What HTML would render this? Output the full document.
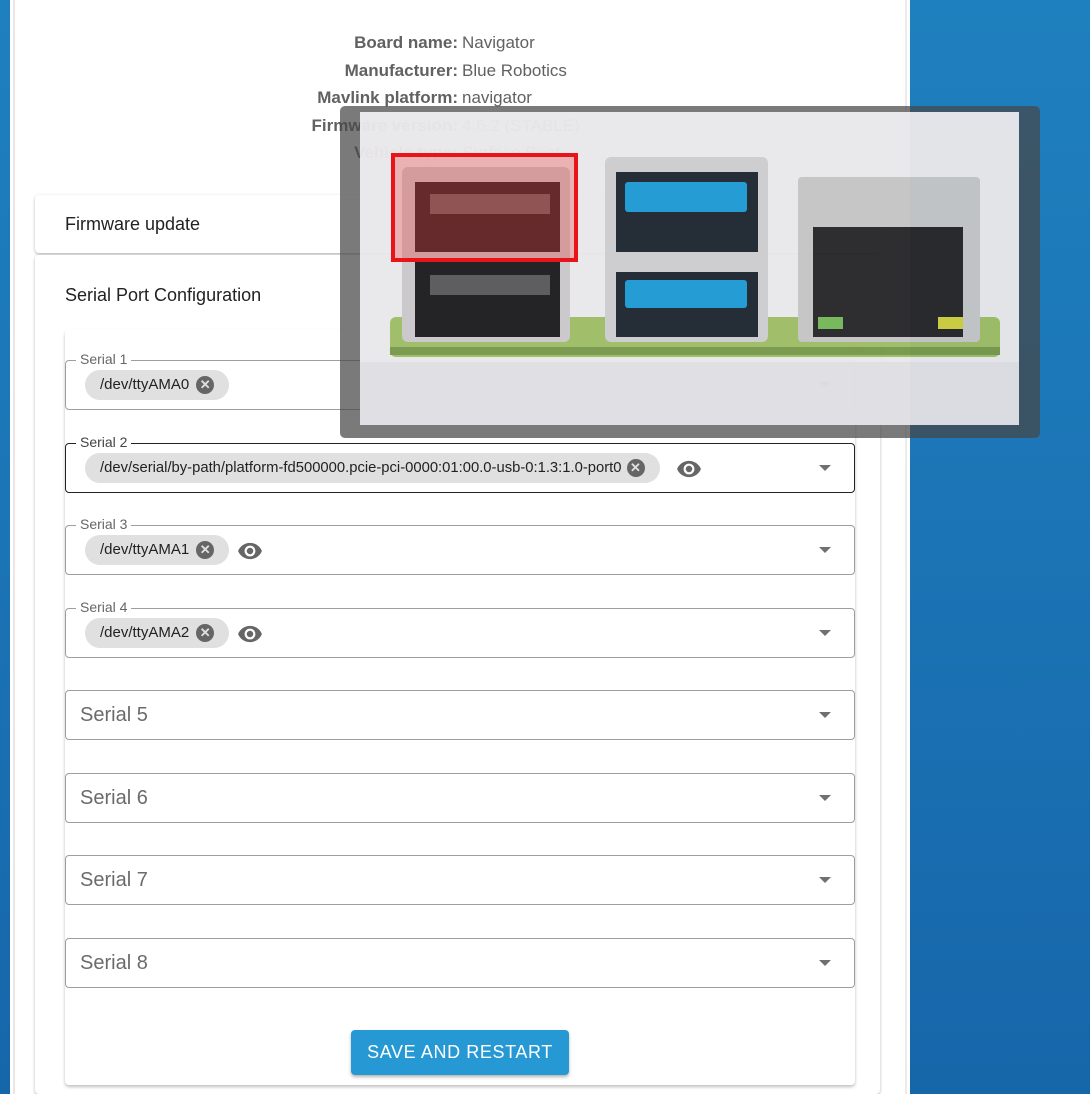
<!DOCTYPE html>
<html><head><meta charset="utf-8">
<style>
*{box-sizing:border-box;margin:0;padding:0}
body{width:1090px;height:1094px;overflow:hidden;position:relative;font-family:"Liberation Sans",Arial,sans-serif;background:linear-gradient(180deg,#1f80bf 0%,#1b74b5 50%,#1666aa 100%)}
.page{position:absolute;left:10px;top:0;width:900px;height:1094px;background:#fff}
.page:before{content:"";position:absolute;left:3px;top:0;width:2px;height:100%;background:#ece4e6}
.page:after{content:"";position:absolute;right:3px;top:0;width:2px;height:100%;background:#ebebeb}
.info{position:absolute;left:0;width:900px;top:31px;font-size:17px;color:#616161}
.info div{height:27.5px;line-height:24px;position:relative}
.info b{position:absolute;right:452px;font-weight:bold}
.info span{position:absolute;left:452px}
.panel{position:absolute;left:35px;width:845px;background:#fff;box-shadow:0 1px 3px rgba(0,0,0,.2),0 2px 2px rgba(0,0,0,.1);border-radius:4px}
.ptitle{position:absolute;left:30px;font-size:18px;color:#222}
.card{position:absolute;left:65px;top:330px;width:790px;height:755px;background:#fff;border-radius:4px;box-shadow:0 2px 3px rgba(0,0,0,.25)}
.field{position:absolute;left:65px;width:790px;height:50px;border:1px solid #9e9e9e;border-radius:4px;background:#fff}
.field.dark{border-color:#222}
.field .lbl{position:absolute;left:10px;top:-10px;background:#fff;padding:0 4px;font-size:14px;color:#666;line-height:16px}
.field .ph{position:absolute;left:14px;top:13px;font-size:20px;color:#6b6b6b}
.field .arr{position:absolute;right:23px;top:21px;width:0;height:0;border-left:6px solid transparent;border-right:6px solid transparent;border-top:6px solid #707070}
.chip{position:absolute;left:19px;top:9px;height:30px;border-radius:15px;background:#e0e0e0;font-size:15px;color:#222;line-height:30px;padding:0 40px 0 15px}
.chip .x{position:absolute;right:15px;top:6px;width:18px;height:18px;border-radius:50%;background:#666;color:#e0e0e0;font-size:13px;line-height:18px;text-align:center;font-weight:bold}
.eye{position:absolute;top:12px}
.btn{position:absolute;left:351px;top:1030px;width:218px;height:45px;background:#2699d4;border-radius:4px;color:#fff;font-size:18px;letter-spacing:.6px;text-align:center;line-height:45px;box-shadow:0 2px 3px rgba(0,0,0,.3)}
.ov{position:absolute;left:340px;top:106px;width:700px;height:332px;background:rgba(70,70,70,.72);border-radius:5px}
.img{position:absolute;left:360px;top:112px;width:659px;height:313px;opacity:.9;overflow:hidden}
</style></head><body>
<div class="page">
 <div class="info">
  <div><b>Board name:</b><span>Navigator</span></div>
  <div><b>Manufacturer:</b><span>Blue Robotics</span></div>
  <div><b>Mavlink platform:</b><span>navigator</span></div>
  <div><b>Firmware version:</b><span>4.6.2 (STABLE)</span></div>
  <div><b>Vehicle type:</b><span>Surface Boat</span></div>
 </div>
</div>
<div class="panel" style="top:195px;height:58px"><div class="ptitle" style="top:19px">Firmware update</div></div>
<div class="panel" style="top:255px;height:839px"><div class="ptitle" style="top:30px">Serial Port Configuration</div></div>
<div class="card"></div>
<svg width="0" height="0" style="position:absolute"><defs><symbol id="eye" viewBox="0 0 24 24"><path fill="#666" d="M12 4.5C7 4.5 2.7 7.6 1 12c1.7 4.4 6 7.5 11 7.5s9.3-3.1 11-7.5c-1.7-4.4-6-7.5-11-7.5zm0 12.5a5 5 0 110-10 5 5 0 010 10zm0-8a3 3 0 100 6 3 3 0 000-6z"/></symbol></defs></svg>
<div class="field" style="top:360px"><div class="lbl">Serial 1</div><div class="chip">/dev/ttyAMA0<span class="x">✕</span></div><div class="arr"></div></div>
<div class="field dark" style="top:443px"><div class="lbl" style="color:#444">Serial 2</div><div class="chip" style="font-size:14.8px;padding-right:38px">/dev/serial/by-path/platform-fd500000.pcie-pci-0000:01:00.0-usb-0:1.3:1.0-port0<span class="x">✕</span></div><svg class="eye" style="left:608px" width="30" height="26"><use href="#eye"/></svg><div class="arr"></div></div>
<div class="field" style="top:525px"><div class="lbl">Serial 3</div><div class="chip">/dev/ttyAMA1<span class="x">✕</span></div><svg class="eye" style="left:169px" width="30" height="26"><use href="#eye"/></svg><div class="arr"></div></div>
<div class="field" style="top:608px"><div class="lbl">Serial 4</div><div class="chip">/dev/ttyAMA2<span class="x">✕</span></div><svg class="eye" style="left:169px" width="30" height="26"><use href="#eye"/></svg><div class="arr"></div></div>
<div class="field" style="top:690px"><div class="ph">Serial 5</div><div class="arr"></div></div>
<div class="field" style="top:773px"><div class="ph">Serial 6</div><div class="arr"></div></div>
<div class="field" style="top:855px"><div class="ph">Serial 7</div><div class="arr"></div></div>
<div class="field" style="top:938px"><div class="ph">Serial 8</div><div class="arr"></div></div>
<div class="btn">SAVE AND RESTART</div>
<div class="ov"></div>
<div class="img">
 <svg width="659" height="313" viewBox="0 0 659 313">
  <rect x="0" y="0" width="659" height="313" fill="#f6f4f7"/>
  <rect x="0" y="250" width="659" height="63" fill="#ecebef"/>
  <rect x="30" y="205" width="610" height="40" rx="6" fill="#a6c76a"/>
  <rect x="30" y="235" width="610" height="8" fill="#7c9f4c"/>
  <rect x="42" y="55" width="168" height="175" rx="6" fill="#d4d2d4"/>
  <rect x="55" y="70" width="145" height="70" fill="#2a2426"/>
  <rect x="70" y="82" width="120" height="20" fill="#6a6466"/>
  <rect x="55" y="150" width="145" height="75" fill="#1b1a1c"/>
  <rect x="70" y="163" width="120" height="20" fill="#5b5a5e"/>
  <rect x="245" y="45" width="163" height="185" rx="6" fill="#d8d7d9"/>
  <rect x="256" y="60" width="142" height="80" fill="#1c2630"/>
  <rect x="265" y="70" width="122" height="30" rx="3" fill="#1da0de"/>
  <rect x="256" y="160" width="142" height="65" fill="#1c2630"/>
  <rect x="265" y="168" width="122" height="28" rx="3" fill="#1da0de"/>
  <rect x="438" y="65" width="182" height="165" rx="4" fill="#cfcfd0"/>
  <rect x="453" y="115" width="150" height="110" fill="#262628"/>
  <rect x="458" y="205" width="25" height="12" fill="#78c05a"/>
  <rect x="578" y="205" width="25" height="12" fill="#d9d840"/>
 </svg>
</div>
<div style="position:absolute;left:391px;top:153px;width:187px;height:109px;border:4px solid #e8141a;background:rgba(240,40,40,.28)"></div>
</body></html>
